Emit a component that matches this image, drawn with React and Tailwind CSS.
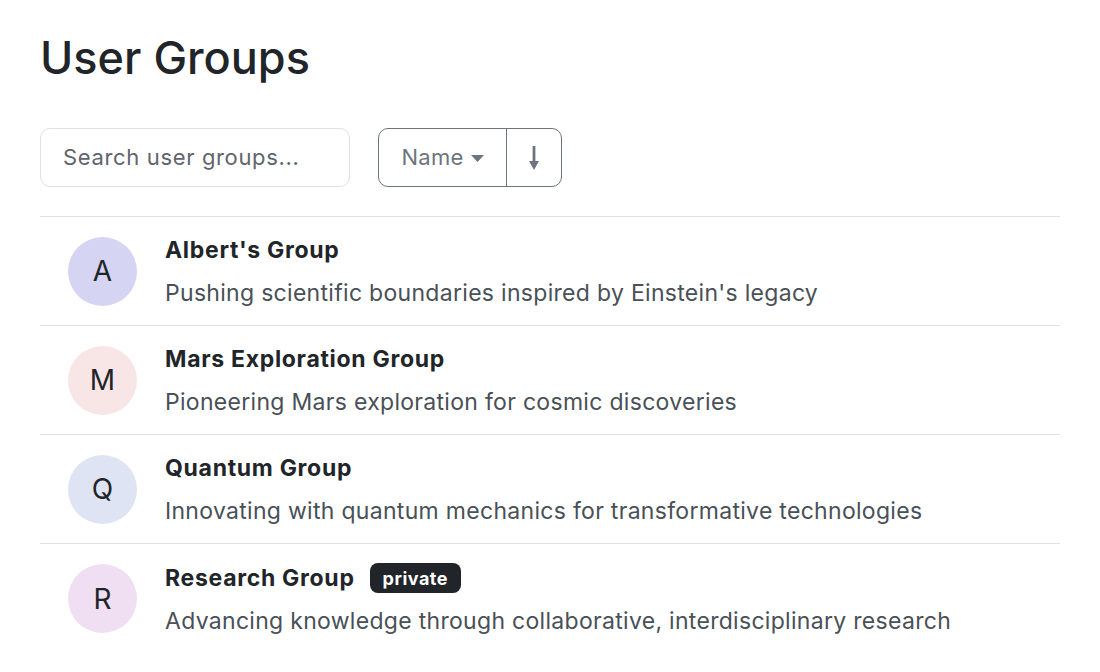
const groups = [
  { letter: 'A', name: "Albert's Group", desc: "Pushing scientific boundaries inspired by Einstein's legacy", bg: 'bg-[#d5d5f3]' },
  { letter: 'M', name: 'Mars Exploration Group', desc: 'Pioneering Mars exploration for cosmic discoveries', bg: 'bg-[#f8e5e5]' },
  { letter: 'Q', name: 'Quantum Group', desc: 'Innovating with quantum mechanics for transformative technologies', bg: 'bg-[#dfe4f5]' },
  { letter: 'R', name: 'Research Group', desc: 'Advancing knowledge through collaborative, interdisciplinary research', bg: 'bg-[#f0dff2]', private: true },
]

function GroupRow({ g }) {
  return (
    <div className="flex items-center gap-7 px-7 h-[109px] border-b border-[#dee2e6] last:border-b-0">
      <div className={`w-[69px] h-[69px] rounded-full shrink-0 flex items-center justify-center text-[28px] text-[#212529] ${g.bg}`}>
        {g.letter}
      </div>
      <div className="pt-[2px]">
        <div className="flex items-center gap-[15px] h-[33px]">
          <span className="text-[23px] font-bold text-[#212529] leading-[33px] tracking-[0.7px]">{g.name}</span>
          {g.private && (
            <span className="bg-[#212529] text-white text-[18px] font-bold rounded-[8px] px-[13px] h-[30px] flex items-center tracking-[0.5px]">private</span>
          )}
        </div>
        <p className="mt-[10px] text-[23px] text-[#495057] leading-[33px] tracking-[0.3px]">{g.desc}</p>
      </div>
    </div>
  )
}

export default function App() {
  return (
    <div className="min-h-screen bg-white px-10 pt-[31px] font-['Inter','Liberation_Sans',sans-serif]">
      <h1 className="text-[45px] font-medium leading-[54px] text-[#212529]">User Groups</h1>

      <div className="flex items-center gap-7 mt-[43px]">
        <div className="w-[310px] h-[59px] rounded-[10px] border border-[#dee2e6] flex items-center px-[22px] text-[22px] text-[#5f656b] tracking-[0.65px]">
          Search user groups...
        </div>
        <div className="flex h-[59px] rounded-[10px] border border-[#6c757d] overflow-hidden">
          <div className="w-[128px] flex items-center justify-center gap-[7px] border-r border-[#6c757d] text-[22px] text-[#6c757d] tracking-[0.3px]">
            Name
            <svg width="13" height="8" viewBox="0 0 13 8" className="mt-[2px]"><path d="M0 0h13L6.5 7z" fill="#6c757d" /></svg>
          </div>
          <div className="w-[54px] flex items-center justify-center">
            <svg width="10" height="24" viewBox="0 0 10 24">
              <rect x="3.6" y="0" width="2.8" height="17" fill="#6c757d" />
              <path d="M0 15h10L5 24z" fill="#6c757d" />
            </svg>
          </div>
        </div>
      </div>

      <div className="mt-[29px] border-t border-[#dee2e6] w-[1020px]">
        {groups.map(g => <GroupRow key={g.letter} g={g} />)}
      </div>
    </div>
  )
}
